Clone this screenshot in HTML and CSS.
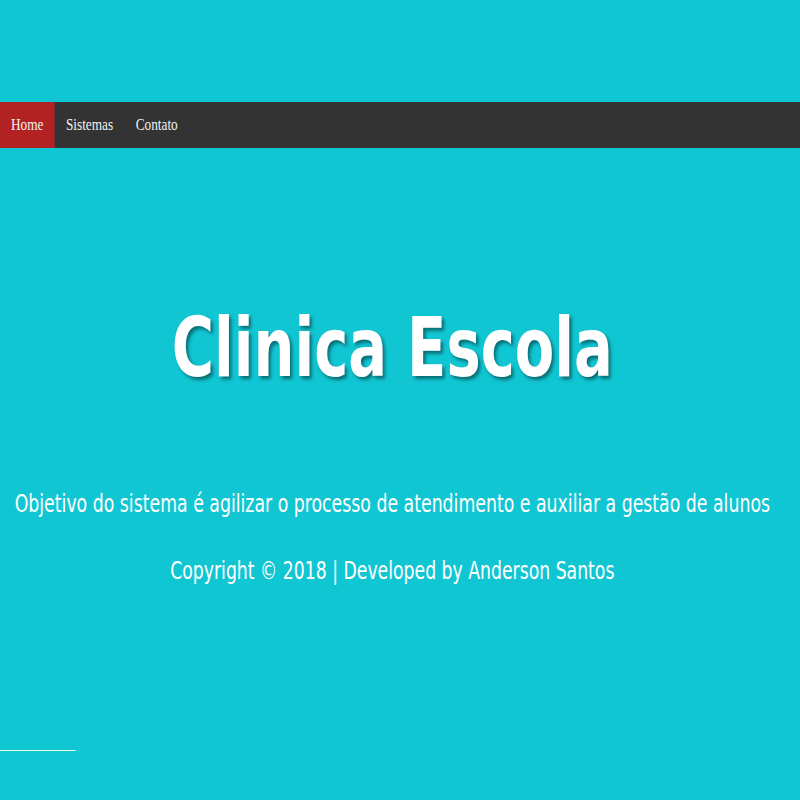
FILE: index.html
```html
<!DOCTYPE html>
<html lang="pt-BR">
<head>
<meta charset="utf-8">
<title>Clinica Escola</title>
<link rel="stylesheet" href="styles.css">
</head>
<body>
<div class="page">
  <nav class="topnav">
    <a class="nav-link active" href="#">Home</a>
    <a class="nav-link" href="#">Sistemas</a>
    <a class="nav-link" href="#">Contato</a>
  </nav>
  <main class="hero">
    <h1 class="title">Clinica Escola</h1>
    <p class="lead">Objetivo do sistema é agilizar o processo de atendimento e auxiliar a gestão de alunos</p>
    <p class="copy">Copyright © 2018 | Developed by Anderson Santos</p>
  </main>
  <div class="rule"></div>
</div>
</body>
</html>
```

FILE: styles.css
```css
html, body {
  margin: 0;
  padding: 0;
  background: #11c6d3;
  overflow: hidden;
}
/* the reference is a horizontally squeezed capture of a ~1025px wide page */
.page {
  width: 1026px;
  height: 800px;
  display: flex;
  flex-direction: column;
  padding-top: 102px;
  box-sizing: border-box;
  transform: scaleX(0.78);
  transform-origin: 0 0;
}
.topnav {
  display: flex;
  height: 46px;
  background: #333333;
}
.nav-link {
  display: flex;
  align-items: center;
  padding: 0 14px;
  color: #f2f2f2;
  text-decoration: none;
  font-family: "Liberation Serif", serif;
  font-size: 17px;
}
.nav-link + .nav-link {
  margin-left: 1px;
}
.nav-link.active {
  background: #b22222;
}
.hero {
  display: flex;
  flex-direction: column;
  align-items: center;
  padding-right: 20px;
  color: #ffffff;
  font-family: "Comic Sans MS", "DejaVu Sans Condensed", sans-serif;
  white-space: nowrap;
}
.title {
  margin: 150px 0 0;
  font-size: 82px;
  font-weight: bold;
  line-height: 100px;
  text-shadow: 3px 3px 4px rgba(0,0,0,0.45);
}
.lead {
  margin: 91px 0 0;
  font-size: 24.7px;
  line-height: 30px;
}
.copy {
  margin: 37px 0 0;
  font-size: 24.6px;
  line-height: 30px;
}
.rule {
  margin-top: 164px;
  width: 97px;
  height: 1px;
  background: #e8fbfd;
}
```
